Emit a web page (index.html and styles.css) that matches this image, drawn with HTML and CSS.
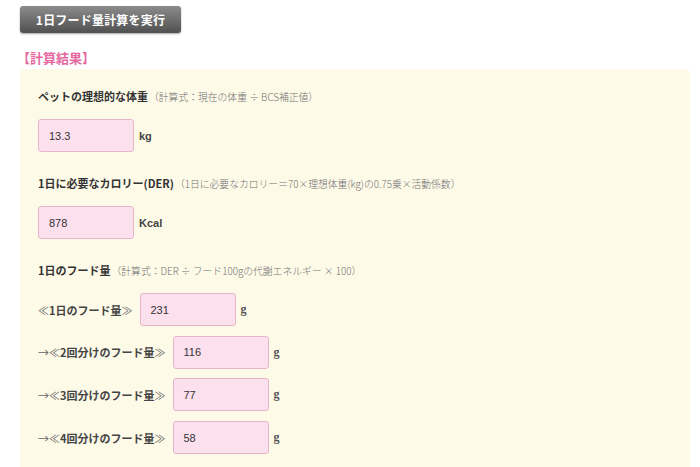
FILE: index.html
```html
<!DOCTYPE html>
<html lang="ja">
<head>
<meta charset="utf-8">
<link rel="stylesheet" href="styles.css">
</head>
<body>
<div class="page">
  <button class="run-btn" type="button">1日フード量計算を実行</button>
  <h2 class="result-title">【計算結果】</h2>
  <div class="panel">
    <p class="q"><b>ペットの理想的な体重</b><span class="note">（計算式：現在の体重 ÷ BCS補正値）</span></p>
    <div class="row"><span class="field">13.3</span><span class="unit">kg</span></div>

    <p class="q"><b>1日に必要なカロリー(DER)</b><span class="note">（1日に必要なカロリー＝70×理想体重(kg)の0.75乗×活動係数）</span></p>
    <div class="row"><span class="field">878</span><span class="unit">Kcal</span></div>

    <p class="q"><b>1日のフード量</b><span class="note">（計算式：DER ÷ フード100gの代謝エネルギー × 100）</span></p>
    <div class="rows">
      <div class="row"><span class="label"><i>≪</i>1日のフード量<i>≫</i></span><span class="field">231</span><span class="unit unit-g">g</span></div>
      <div class="row"><span class="label"><i>→≪</i>2回分けのフード量<i>≫</i></span><span class="field">116</span><span class="unit unit-g">g</span></div>
      <div class="row"><span class="label"><i>→≪</i>3回分けのフード量<i>≫</i></span><span class="field">77</span><span class="unit unit-g">g</span></div>
      <div class="row"><span class="label"><i>→≪</i>4回分けのフード量<i>≫</i></span><span class="field">58</span><span class="unit unit-g">g</span></div>
    </div>
  </div>
</div>
</body>
</html>
```

FILE: styles.css
```css
html, body {
  margin: 0;
  padding: 0;
  background: #ffffff;
}
body {
  font-family: "Noto Sans CJK JP", "Noto Sans", sans-serif;
  color: #333333;
  overflow: hidden;
}
.page {
  padding-top: 6px;
}
.run-btn {
  display: block;
  margin: 0 0 0 20px;
  width: 161px;
  height: 27px;
  padding: 0;
  border: none;
  border-radius: 3px;
  background: linear-gradient(#8c8c8c, #505050);
  box-shadow: 0 1px 2px rgba(0,0,0,0.35);
  color: #ffffff;
  font-family: "Noto Sans CJK JP", sans-serif;
  font-size: 12px;
  font-weight: bold;
  letter-spacing: 0.2px;
}
.result-title {
  margin: 16px 0 0 17px;
  font-size: 13px;
  line-height: 17px;
  font-weight: bold;
  color: #e5689f;
  height: 20px;
}
.panel {
  margin-left: 20px;
  width: 670px;
  height: 420px;
  background: #fefae8;
  border-radius: 4px;
  padding: 19px 0 0 18px;
  box-sizing: border-box;
}
.q {
  margin: 0 0 14px 0;
  font-size: 11px;
  line-height: 16px;
  color: #333333;
}
.q b {
  font-weight: bold;
}
.note {
  font-size: 9.8px;
  color: #707070;
  font-weight: 300;
  margin-left: 1px;
}
.row {
  display: flex;
  align-items: center;
  margin-bottom: 23px;
}
.rows {
  display: flex;
  flex-direction: column;
  gap: 9.7px;
}
.rows .row {
  margin-bottom: 0;
}
.label {
  font-size: 11px;
  font-weight: bold;
  color: #444444;
  margin-right: 7px;
}
.label i {
  font-style: normal;
  font-weight: normal;
  color: #666666;
}
.field {
  box-sizing: border-box;
  width: 96px;
  height: 33px;
  background: #fde0ee;
  border: 1px solid #e6b6cc;
  border-radius: 3px;
  padding-left: 10px;
  display: flex;
  align-items: center;
  font-family: "Liberation Sans", Arial, sans-serif;
  font-size: 11px;
  color: #333333;
}
.unit {
  margin-left: 5px;
  font-family: "Liberation Sans", Arial, sans-serif;
  font-size: 11px;
  font-weight: bold;
  color: #444444;
}
.unit-g {
  font-family: "Liberation Serif", "Times New Roman", serif;
  font-size: 12px;
  color: #555555;
}
```
